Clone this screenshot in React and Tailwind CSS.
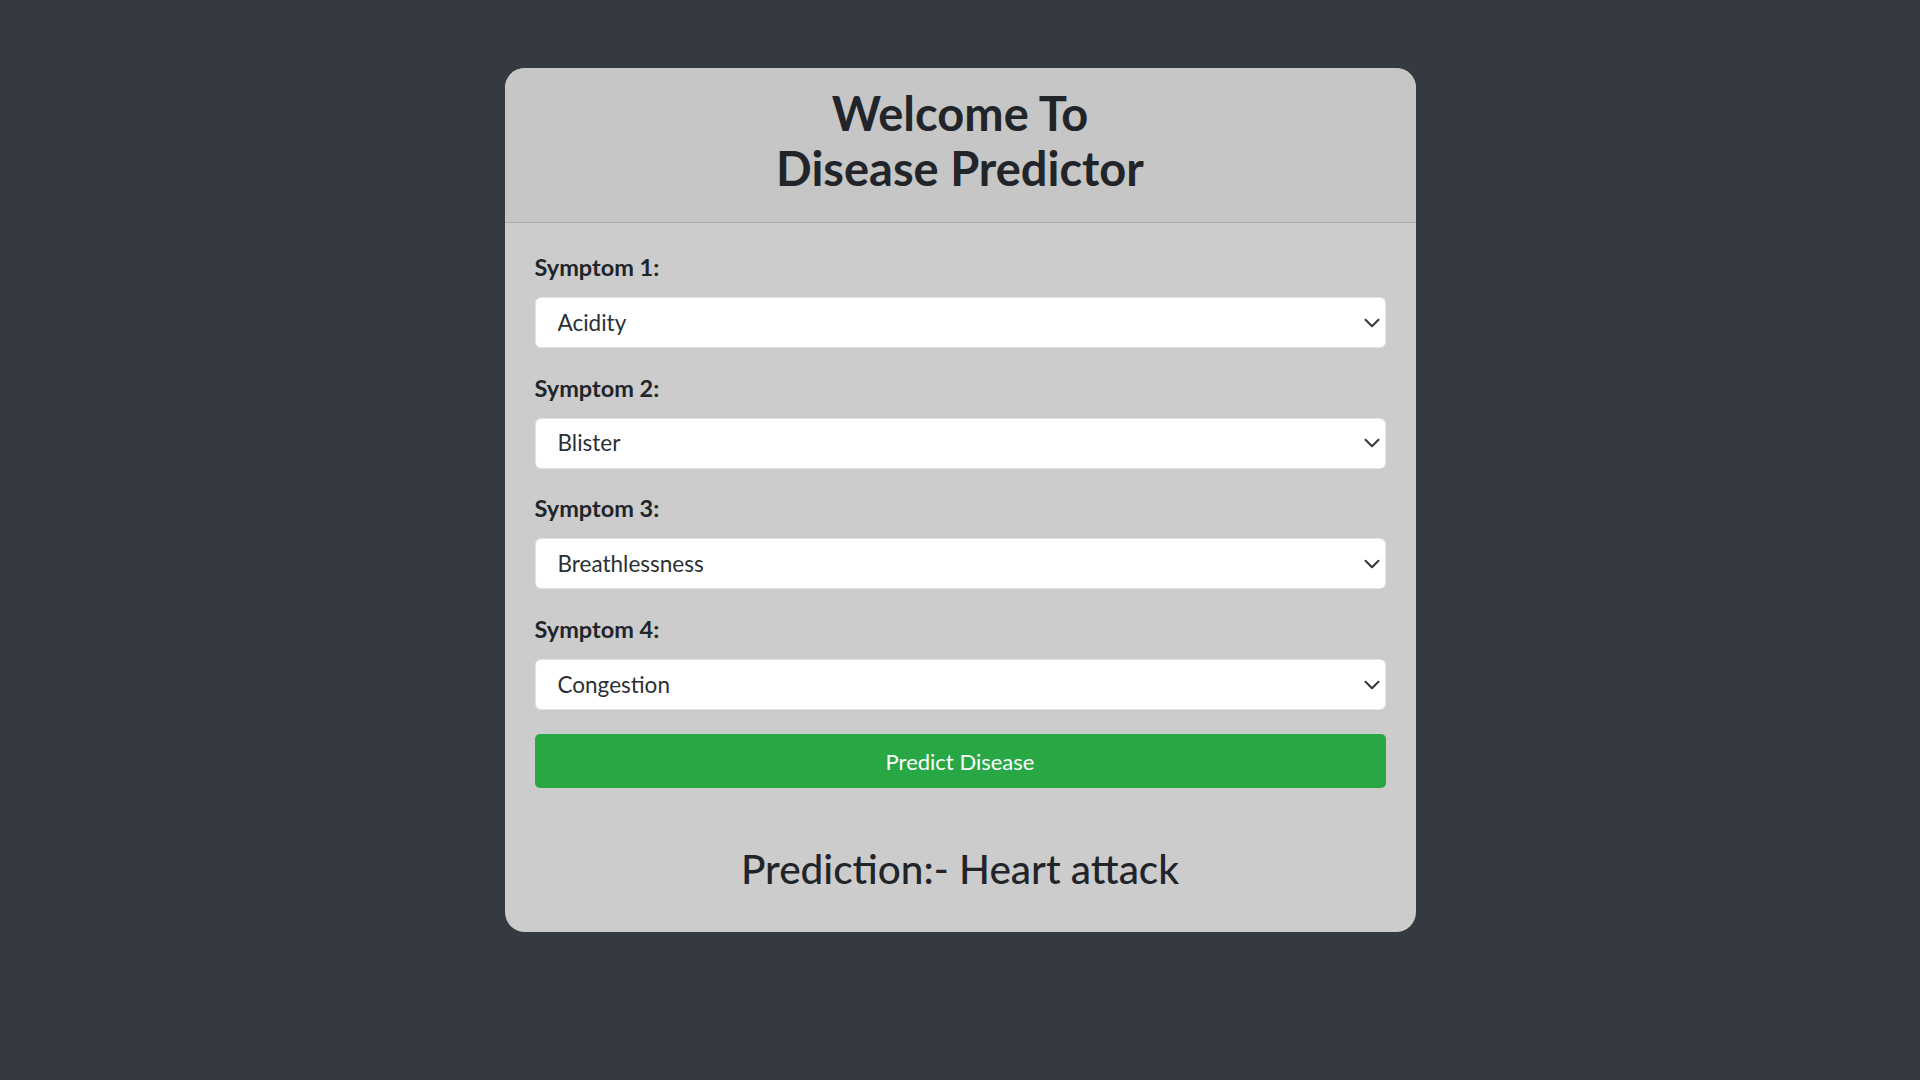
import { ChevronDown } from 'lucide-react'

const symptoms = [
  { label: 'Symptom 1:', value: 'Acidity' },
  { label: 'Symptom 2:', value: 'Blister' },
  { label: 'Symptom 3:', value: 'Breathlessness' },
  { label: 'Symptom 4:', value: 'Congestion' },
]

function SymptomSelect({ label, value }) {
  return (
    <div>
      <label className="block text-[23.5px] leading-[28px] font-bold text-[#212529] mb-[16px]">{label}</label>
      <div className="relative">
        <select
          defaultValue={value}
          className="appearance-none w-full h-[51px] bg-white border border-[#e3e3e3] rounded-[6px] pl-[22px] pr-12 text-[22.5px] text-[#2b3035] outline-none"
          style={{ fontFamily: 'Lato, sans-serif' }}
        >
          <option>{value}</option>
        </select>
        <ChevronDown
          className="absolute right-[1px] top-1/2 -translate-y-1/2 w-[26px] h-[26px] text-[#343a40] pointer-events-none"
          strokeWidth={1.9}
        />
      </div>
    </div>
  )
}

export default function App() {
  return (
    <div className="min-h-screen bg-[#343a40] pt-[68px] font-['Lato',sans-serif]">
      <div className="mx-auto w-[911px] rounded-[20px] overflow-hidden bg-[#cccccc]">
        <div className="bg-[#c6c6c6] border-b border-[#adadad] pt-[18px] pb-[26px] h-[155px]">
          <h1 className="text-center text-[47px] leading-[55px] font-bold text-[#212529]">
            Welcome To
            <br />
            Disease Predictor
          </h1>
        </div>
        <div className="px-[30px] pt-[30px] pb-[39px]">
          <div className="flex flex-col gap-[25.7px]">
            {symptoms.map((s) => (
              <SymptomSelect key={s.label} label={s.label} value={s.value} />
            ))}
          </div>
          <button className="mt-[24px] w-full h-[54px] bg-[#28a745] rounded-[5px] text-white text-[22px]">
            Predict Disease
          </button>
          <h2 className="mt-[57px] text-center text-[40.5px] leading-[48px] font-medium text-[#212529]">
            Prediction:- Heart attack
          </h2>
        </div>
      </div>
    </div>
  )
}
